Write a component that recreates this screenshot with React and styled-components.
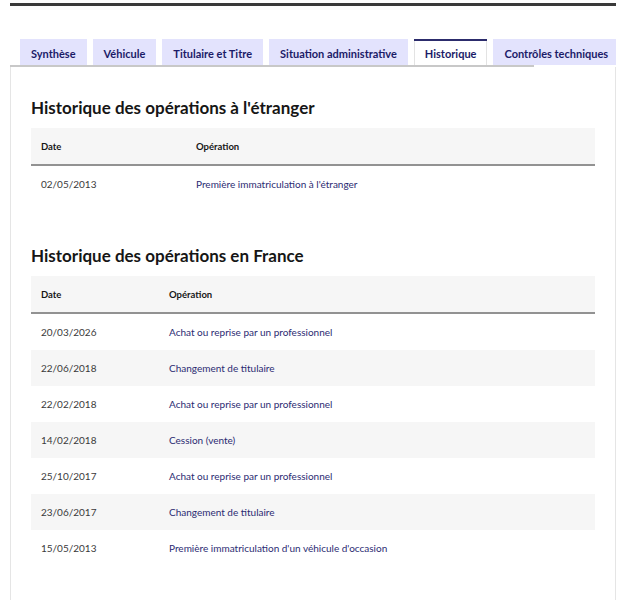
import React from 'react';
import styled, { createGlobalStyle } from 'styled-components';

const GlobalStyle = createGlobalStyle`
  body {
    margin: 0;
    background: #fff;
    font-family: Lato, "Noto Sans", sans-serif;
    color: #161616;
  }
`;

const Page = styled.div`
  width: 606px;
  margin-left: 10px;
  height: 600px;
  overflow: hidden;
  border-top: 3px solid #3a3a3a;
  margin-top: 3px;
`;

const TabList = styled.div`
  display: flex;
  gap: 6px;
  padding: 0 0 0 10px;
  margin-top: 33px;
`;

const Tab = styled.div`
  height: 26px;
  box-sizing: border-box;
  padding: 0 11px;
  display: flex;
  align-items: center;
  font-size: 11px;
  font-weight: 700;
  color: #1b1b68;
  background: ${(p) => (p.$active ? '#fff' : '#e3e3fd')};
  border-top: 2px solid ${(p) => (p.$active ? '#2c2c6c' : 'transparent')};
  box-shadow: ${(p) => (p.$active ? 'inset 1px 0 #e3e3e3, inset -1px 0 #e3e3e3' : 'none')};
  white-space: nowrap;
`;

const Underline = styled.div`
  width: 524px;
  height: 2px;
  background: #c8c8c8;
`;

const Panel = styled.div`
  border-left: 1px solid #e5e5e5;
  border-right: 1px solid #e5e5e5;
  padding: 29px 20px 40px 20px;
`;

const Title = styled.h2`
  margin: 0 0 8px;
  font-size: 17px;
  font-weight: 700;
  line-height: 24px;
  color: #161616;
`;

const Table = styled.table`
  width: 100%;
  table-layout: fixed;
  border-collapse: collapse;
  font-size: 10px;
  margin-bottom: ${(p) => p.$gap || 0}px;
`;

const HeadCell = styled.th`
  text-align: left;
  font-weight: 700;
  font-size: 9.5px;
  background: #f6f6f6;
  height: 36px;
  padding: 0 10px;
  border-bottom: 2px solid #929292;
  color: #161616;
  width: ${(p) => (p.$w ? `${p.$w}px` : 'auto')};
`;

const Row = styled.tr`
  background: ${(p) => (p.$odd ? '#f6f6f6' : '#fff')};
`;

const Cell = styled.td`
  height: 36px;
  padding: 0 10px;
  color: ${(p) => (p.$op ? '#2b2b72' : '#3a3a3a')};
`;

const abroad = [['02/05/2013', "Première immatriculation à l'étranger"]];

const france = [
  ['20/03/2026', 'Achat ou reprise par un professionnel'],
  ['22/06/2018', 'Changement de titulaire'],
  ['22/02/2018', 'Achat ou reprise par un professionnel'],
  ['14/02/2018', 'Cession (vente)'],
  ['25/10/2017', 'Achat ou reprise par un professionnel'],
  ['23/06/2017', 'Changement de titulaire'],
  ['15/05/2013', "Première immatriculation d'un véhicule d'occasion"],
];

function History({ rows, dateWidth, gap }) {
  return (
    <Table $gap={gap}>
      <thead>
        <tr>
          <HeadCell $w={dateWidth}>Date</HeadCell>
          <HeadCell>Opération</HeadCell>
        </tr>
      </thead>
      <tbody>
        {rows.map(([d, op], i) => (
          <Row key={i} $odd={i % 2 === 1}>
            <Cell>{d}</Cell>
            <Cell $op>{op}</Cell>
          </Row>
        ))}
      </tbody>
    </Table>
  );
}

const tabs = [
  'Synthèse',
  'Véhicule',
  'Titulaire et Titre',
  'Situation administrative',
  'Historique',
  'Contrôles techniques',
];

export default function App() {
  return (
    <>
      <GlobalStyle />
      <Page>
        <TabList>
          {tabs.map((t) => (
            <Tab key={t} $active={t === 'Historique'}>
              {t}
            </Tab>
          ))}
        </TabList>
        <Underline />
        <Panel>
          <Title>Historique des opérations à l'étranger</Title>
          <History rows={abroad} dateWidth={135} gap={42} />
          <Title>Historique des opérations en France</Title>
          <History rows={france} dateWidth={108} />
        </Panel>
      </Page>
    </>
  );
}
